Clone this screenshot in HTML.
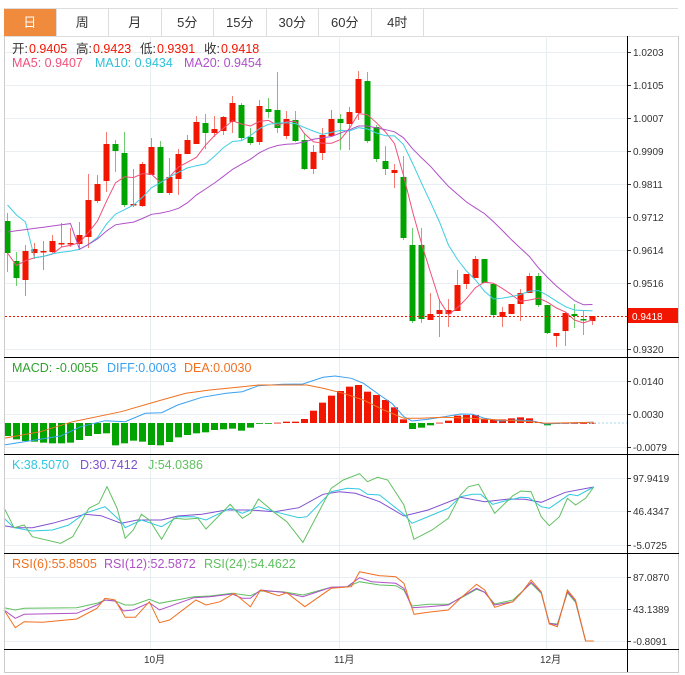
<!DOCTYPE html><html><head><meta charset="utf-8"><style>
body{margin:0;background:#fff;font-family:"Liberation Sans","Noto Sans CJK SC",sans-serif;}
#wrap{position:relative;width:685px;height:675px;overflow:hidden}
.tabs{position:absolute;left:4px;top:8px;height:27px;width:674px;border-top:1px solid #ddd;border-bottom:1px solid #ddd;display:flex}
.tabs div{width:52.5px;border-right:1px solid #ddd;text-align:center;line-height:27px;font-size:13px;color:#333;box-sizing:border-box}
.tabs div.on{background:#f08a3c;color:#fff}
svg{position:absolute;left:0;top:0}
</style></head><body><div id="wrap">
<div class="tabs"><div class="on">日</div><div>周</div><div>月</div><div>5分</div><div>15分</div><div>30分</div><div>60分</div><div>4时</div></div>
<svg id="s" width="685" height="675" xmlns="http://www.w3.org/2000/svg" font-family="Liberation Sans, Noto Sans CJK SC, sans-serif"></svg>
</div>
<script>
var C=[[221,253,213,272],[261,278,252,286],[280,251,245,296],[253,249,243,259],[252,251,241,270],[252,241,235,253],[243,243,223,247],[243,243,228,247],[244,235,222,248],[237,200,174,248],[201,184,175,203],[181,144,132,192],[144,151,140,172],[153,205,132,207],[204,204,169,207],[206,164,162,207],[175,147,138,175],[147,193,141,193],[193,177,158,195],[179,154,149,195],[154,140,135,154],[144,122,116,144],[123,133,114,149],[133,129,116,137],[131,117,116,135],[122,103,96,133],[105,138,103,140],[137,143,128,145],[142,106,100,145],[109,112,98,118],[110,128,72,133],[136,119,111,139],[120,141,111,142],[140,169,133,170],[169,152,145,174],[153,135,128,160],[136,119,110,136],[119,123,114,150],[124,112,107,150],[113,79,71,120],[81,141,72,143],[127,159,125,162],[161,169,146,175],[173,170,164,188],[177,238,156,240],[245,321,228,323],[245,319,228,323],[320,314,293,320],[314,310,299,337],[314,310,299,327],[311,285,270,311],[284,274,274,289],[278,259,256,278],[259,283,259,283],[284,315,284,318],[317,312,307,327],[314,304,304,314],[304,293,289,321],[293,276,273,293],[276,305,273,307],[305,333,305,334],[336,333,333,347],[331,313,312,346],[314,316,304,328],[319,320,310,335],[321,316,316,325]];
var s=document.getElementById('s'),h='';
function L(x1,y1,x2,y2,c,w,d){h+='<line x1="'+x1+'" y1="'+y1+'" x2="'+x2+'" y2="'+y2+'" stroke="'+c+'" stroke-width="'+(w||1)+'"'+(d?' stroke-dasharray="'+d+'"':'')+'/>';}
function T(x,y,t,c,sz){h+='<text x="'+x+'" y="'+y+'" fill="'+c+'" font-size="'+(sz||11)+'">'+t+'</text>';}
function P(pts,c){h+='<polyline fill="none" stroke="'+c+'" stroke-width="1" points="'+pts.map(function(p){return p[0].toFixed(1)+','+p[1].toFixed(1)}).join(' ')+'"/>';}
function Z(a,y0){var r=[];for(var i=0;i<a.length;i+=2)r.push([a[i]/2.476,y0+a[i+1]/3]);return r;}
var X=function(i){return 7.5+9*i};
var gl=[[52,'1.0203'],[85,'1.0105'],[118,'1.0007'],[151,'0.9909'],[184,'0.9811'],[217,'0.9712'],[250,'0.9614'],[283,'0.9516'],[349,'0.9320'],[381,'0.0140'],[414,'0.0030'],[447,'-0.0079'],[478,'97.9419'],[511,'46.4347'],[545,'-5.0725'],[577,'87.0870'],[609,'43.1389'],[641,'-0.8091']];
gl.forEach(function(g){L(5,g[0]+.5,627,g[0]+.5,'#e8eef2');L(627,g[0]+.5,631,g[0]+.5,'#333');T(633,g[0]+4,g[1],'#333',10);});
[150,339,546].forEach(function(x){L(x+.5,36,x+.5,649,'#e6eef0');});
var cl=C.map(function(c){return c[1]});
C.forEach(function(c,i){var x=X(i);var col=c[1]<=c[0]?'#f21600':'#00a300';var wc=c[1]<=c[0]?'#f57a70':'#6ccc6c';
L(x,c[2],x,c[3],wc);var t=Math.min(c[0],c[1]),b=Math.max(c[0],c[1]);h+='<rect x="'+(x-3)+'" y="'+t+'" width="6" height="'+Math.max(1.5,b-t)+'" fill="'+col+'"/>';});
function MA(n){var r=[];for(var i=0;i<cl.length;i++){var a=0,k=0;for(var j=Math.max(0,i-n+1);j<=i;j++){a+=cl[j];k++;}r.push([X(i),a/k]);}return r;}
var m10=MA(10),m20=MA(20);
m10[0][1]=205;m10[1][1]=215;m10[2][1]=222;for(var i=0;i<8;i++){m20[i][1]=232-i*1.2}
P(MA(5),'#f0507a');P(m10,'#3ecde0');P(m20,'#b050c8');
L(5,316.5,627,316.5,'#f21600',1,'2,2');
h+='<rect x="628" y="308" width="50" height="15" fill="#f21600"/>';T(632,320,'0.9418','#fff',10);
var hb=[228,238,243,245,248,250,250,248,240,228,222,220,256,250,242,245,255,256,246,232,225,220,217,210,208,206,212,203,190,190,188,185,185,177,152,128,107,93,80,75,95,105,120,142,178,207,203,196,188,182,167,165,165,178,180,178,175,172,175,186,196,189,189,189,189,189];
hb.forEach(function(z,i){var y=360+z/3,t=Math.min(y,423),b=Math.max(y,423);h+='<rect x="'+(X(i)-3.5)+'" y="'+t+'" width="7" height="'+Math.max(0.8,b-t)+'" fill="'+(y<=423?'#f21600':'#00a300')+'"/>';});
P(Z([10,255,60,245,150,228,200,200,260,182,310,185,360,160,400,158,440,135,500,112,560,100,600,95,640,77,700,73,750,72,800,52,830,48,870,55,900,70,940,105,970,130,1000,170,1020,183,1060,178,1100,170,1140,162,1170,163,1200,175,1240,183,1280,180,1320,183,1350,192,1390,190,1470,187],360),'#3aa0f0');
P(Z([10,235,100,215,180,185,300,155,400,120,460,100,520,90,600,80,640,75,760,75,800,85,850,100,900,120,950,150,1000,175,1040,175,1100,172,1160,175,1240,180,1320,185,1350,190,1470,187],360),'#f07020');
L(590,423,627,423,'#a8d8f0',1,'2,2');
P(Z([10,212,40,218,80,218,130,205,210,178,250,182,300,205,340,195,400,195,440,183,500,178,560,165,620,165,680,170,740,158,800,118,840,110,880,115,940,140,1000,183,1060,165,1140,127,1200,140,1260,132,1300,133,1340,142,1400,112,1470,96],455),'#8050d0');
P(Z([10,190,35,218,80,228,130,225,170,210,210,175,260,155,300,200,310,218,350,195,400,215,440,185,480,185,510,195,570,160,600,175,640,155,680,170,740,188,760,185,820,110,860,100,890,102,910,118,940,120,1000,178,1020,205,1070,180,1110,160,1140,125,1170,118,1190,118,1220,148,1250,138,1290,127,1310,128,1340,155,1360,160,1410,118,1430,122,1470,96],455),'#30c8e0');
P(Z([10,158,35,218,60,210,80,245,150,265,180,245,220,160,245,145,265,95,290,160,310,250,330,225,350,178,370,195,400,253,430,190,460,193,490,190,510,222,570,148,600,190,620,175,640,132,680,173,710,200,750,262,820,100,850,75,890,56,910,80,935,67,960,75,1000,150,1025,253,1070,225,1110,190,1140,120,1160,95,1185,88,1225,175,1270,122,1290,108,1315,110,1340,185,1360,212,1385,185,1405,130,1425,150,1450,130,1470,96],455),'#60c060');
P(Z([10,158,38,165,60,160,190,158,240,145,260,135,285,138,310,150,330,150,370,133,395,145,480,125,520,123,575,115,620,122,645,108,700,110,750,120,820,97,860,95,890,80,940,90,980,92,1000,105,1020,153,1060,148,1110,148,1140,130,1180,103,1200,112,1225,147,1270,135,1315,85,1340,115,1360,205,1380,207,1405,113,1425,142,1450,258,1470,258],555),'#60c060');
P(Z([10,165,38,190,60,178,190,175,240,150,260,135,285,138,305,168,330,165,370,143,395,165,480,128,520,125,575,117,600,130,620,130,645,105,700,112,750,125,820,97,860,95,890,68,920,80,980,85,1000,100,1020,158,1060,155,1110,150,1140,128,1180,100,1200,112,1225,150,1270,140,1315,82,1340,112,1360,205,1380,210,1405,110,1425,138,1450,258],555),'#b050c8');
P(Z([10,165,38,218,60,200,105,202,190,192,240,160,260,130,285,135,310,187,335,187,370,140,395,203,420,195,485,135,510,150,545,140,580,115,620,155,645,105,690,122,710,113,755,155,820,100,870,95,890,50,940,62,980,65,1000,85,1025,178,1060,172,1110,165,1140,130,1180,88,1200,105,1225,157,1270,140,1290,115,1315,75,1340,110,1360,207,1380,215,1405,105,1425,135,1450,258,1470,258],555),'#f07020');
L(4.5,36,4.5,672,'#ccc');L(4,672.5,679,672.5,'#ccc');L(678.5,36,678.5,672,'#ccc');
L(627.5,36,627.5,672,'#000');
[357,454,553,649].forEach(function(y){L(4,y+.5,679,y+.5,'#000');});
T(12,53,'开:','#333',12.5);T(29,53,'0.9405','#f21600',12.5);T(76,53,'高:','#333',12.5);T(93,53,'0.9423','#f21600',12.5);
T(140,53,'低:','#333',12.5);T(157,53,'0.9391','#f21600',12.5);T(204,53,'收:','#333',12.5);T(221,53,'0.9418','#f21600',12.5);
T(12,67,'MA5: 0.9407','#f0507a',12.5);T(95,67,'MA10: 0.9434','#30c0d8',12.5);T(184,67,'MA20: 0.9454','#b050c8',12.5);
T(12,372,'MACD: -0.0055','#30a030',12.5);T(107,372,'DIFF:0.0003','#3aa0f0',12.5);T(184,372,'DEA:0.0030','#f07020',12.5);
T(12,469,'K:38.5070','#30c8e0',12.5);T(80,469,'D:30.7412','#8050d0',12.5);T(148,469,'J:54.0386','#60c060',12.5);
T(12,568,'RSI(6):55.8505','#f07020',12.5);T(104,568,'RSI(12):52.5872','#b050c8',12.5);T(204,568,'RSI(24):54.4622','#60c060',12.5);
T(144,663,'10月','#333',10);T(334,663,'11月','#333',10);T(540,663,'12月','#333',10);
s.innerHTML=h;
</script></body></html>
